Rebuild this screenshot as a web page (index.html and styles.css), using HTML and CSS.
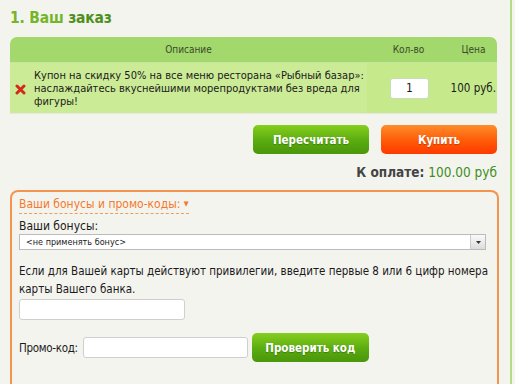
FILE: index.html
```html
<!DOCTYPE html>
<html lang="ru">
<head>
<meta charset="utf-8">
<link rel="stylesheet" href="styles.css">
</head>
<body>
<div class="frame">
  <h1 class="title"><span class="t1">1. Ваш</span> <span class="t2">заказ</span></h1>
  <div class="order">
    <div class="thead">
      <div class="c-desc">Описание</div>
      <div class="c-qty">Кол-во</div>
      <div class="c-price">Цена</div>
    </div>
    <div class="trow">
      <div class="c-desc cell-desc">
        <svg class="del" width="11" height="11" viewBox="0 0 11 11"><path d="M2 2 L9 9 M9 2 L2 9" stroke="#d42a1e" stroke-width="3" stroke-linecap="round"/></svg>
        <span>Купон на скидку 50% на все меню ресторана «Рыбный базар»: наслаждайтесь вкуснейшими морепродуктами без вреда для фигуры!</span>
      </div>
      <div class="c-qty cell-qty"><div class="qty">1</div></div>
      <div class="c-price cell-price">100 руб.</div>
    </div>
  </div>
  <div class="actions">
    <button class="btn btn-green">Пересчитать</button>
    <button class="btn btn-orange">Купить</button>
  </div>
  <div class="total"><span class="total-label">К оплате:</span> <span class="total-sum">100.00 руб</span></div>
  <div class="bonus">
    <div class="bonus-title"><span class="dash">Ваши бонусы и промо-коды: <span class="arr">▼</span></span></div>
    <div class="lbl">Ваши бонусы:</div>
    <div class="select"><span>&lt;не применять бонус&gt;</span><span class="sel-btn"><svg width="5" height="3" viewBox="0 0 5 3"><path d="M0 0H5L2.5 3Z" fill="#333"/></svg></span></div>
    <p class="note">Если для Вашей карты действуют привилегии, введите первые 8 или 6 цифр номера карты Вашего банка.</p>
    <div class="field card"></div>
    <div class="promo">
      <span class="lbl2">Промо-код:</span>
      <div class="field promo-in"></div>
      <button class="btn btn-green btn-check">Проверить код</button>
    </div>
  </div>
</div>
</body>
</html>
```
FILE: styles.css
```css
html, body { margin: 0; padding: 0; }
body {
  background: #f4f4ef;
  font-family: "DejaVu Sans Condensed", "DejaVu Sans", sans-serif;
  color: #1a1a1a;
  width: 515px;
  height: 384px;
  overflow: hidden;
}
.frame {
  width: 512px;
  height: 384px;
  border-right: 2px solid #b4dc84;
  box-sizing: border-box;
  padding: 0 0 0 10px;
  display: flex;
  flex-direction: column;
}
.title {
  margin: 0;
  padding-top: 7px;
  height: 37px;
  flex: none;
  box-sizing: border-box;
  font-size: 15.5px;
  letter-spacing: -0.2px;
  font-weight: bold;
  line-height: 22px;
}
.t1 { color: #74b52a; }
.t2 { color: #4f8f1c; }
.order {
  width: 487px;
  flex: none;
  border-radius: 7px 7px 0 0;
  overflow: hidden;
  box-shadow: 0 1px 1px rgba(0,0,0,0.06);
}
.thead {
  display: flex;
  height: 26px;
  background: #a2d86c;
  border-bottom: 1px solid #c4e89a;
  box-sizing: border-box;
  font-size: 10px;
  color: #3a4a2a;
  align-items: center;
}
.c-desc { width: 357px; text-align: center; }
.c-qty { width: 83px; text-align: center; }
.c-price { width: 47px; text-align: center; }
.trow {
  display: flex;
  height: 50px;
  background: #cceb96;
  font-size: 11px;
  line-height: 13px;
}
.cell-desc {
  display: flex;
  align-items: center;
  text-align: left;
  gap: 8px;
  padding-left: 5px;
  box-sizing: border-box;
}
.del { flex: none; margin-top: 2px; }
.cell-qty, .cell-price {
  background: #c6e98b;
  display: flex;
  align-items: center;
  justify-content: center;
}
.cell-price { justify-content: flex-end; padding-right: 1px; box-sizing: border-box; white-space: nowrap; font-size: 11.5px; }
.qty {
  width: 39px;
  height: 21px;
  box-sizing: border-box;
  background: #fff;
  border: 1px solid #c9dcb8;
  border-radius: 3px;
  text-align: center;
  line-height: 19px;
  font-size: 12px;
  margin-left: 2px;
}
.actions {
  display: flex;
  flex: none;
  justify-content: flex-end;
  gap: 12px;
  width: 487px;
  margin-top: 12px;
}
.btn {
  border: none;
  border-radius: 5px;
  color: #fff;
  font-family: inherit;
  font-weight: bold;
  font-size: 11.5px;
  width: 116px;
  height: 29px;
  padding: 0;
  text-shadow: 0 1px 1px rgba(0,0,0,0.25);
}
.btn-green { background: linear-gradient(#86cf1e, #5aab10 55%, #4a960a); }
.btn-orange { background: linear-gradient(#ff8c2a, #ff5a08 55%, #ff3a00); }
.total {
  width: 487px;
  flex: none;
  text-align: right;
  margin-top: 9px;
  font-size: 13.5px;
  line-height: 18px;
}
.total-label { color: #444; font-weight: bold; }
.total-sum { color: #3f8d1e; }
.bonus {
  margin-top: 9px;
  width: 489px;
  flex: 1;
  min-height: 0;
  box-sizing: border-box;
  border: 2px solid #f5944e;
  border-bottom: none;
  border-radius: 8px 8px 0 0;
  padding: 5px 0 0 7px;
}
.bonus-title { font-size: 12px; line-height: 15px; color: #f37a2c; height: 22px; }
.dash { border-bottom: 1px dashed #f59a55; padding-bottom: 2px; }
.arr { font-size: 7px; vertical-align: 2px; }
.lbl { font-size: 12px; line-height: 14px; margin-top: 0; }
.select {
  margin-top: 1px;
  width: 467px;
  height: 16px;
  box-sizing: border-box;
  background: #fff;
  border: 1px solid #bbb;
  font-size: 9px;
  line-height: 14px;
  padding-left: 6px;
  display: flex;
  justify-content: space-between;
}
.sel-btn {
  width: 14px;
  height: 14px;
  border-left: 1px solid #ccc;
  background: linear-gradient(#fafafa, #dcdcdc);
  display: flex;
  align-items: center;
  justify-content: center;
}
.note {
  margin: 12px 0 0;
  font-size: 11.5px;
  line-height: 18px;
  width: 470px;
}
.field {
  background: #fff;
  border: 1px solid #cfcfcf;
  border-radius: 3px;
  box-sizing: border-box;
  height: 21px;
}
.card { width: 166px; margin-top: 1px; }
.promo {
  display: flex;
  align-items: center;
  margin-top: 13px;
  gap: 4px;
}
.lbl2 { font-size: 11.5px; letter-spacing: -0.3px; margin-right: 1px; }
.promo-in { width: 165px; }
.btn-check { width: 117px; height: 29px; }
```
